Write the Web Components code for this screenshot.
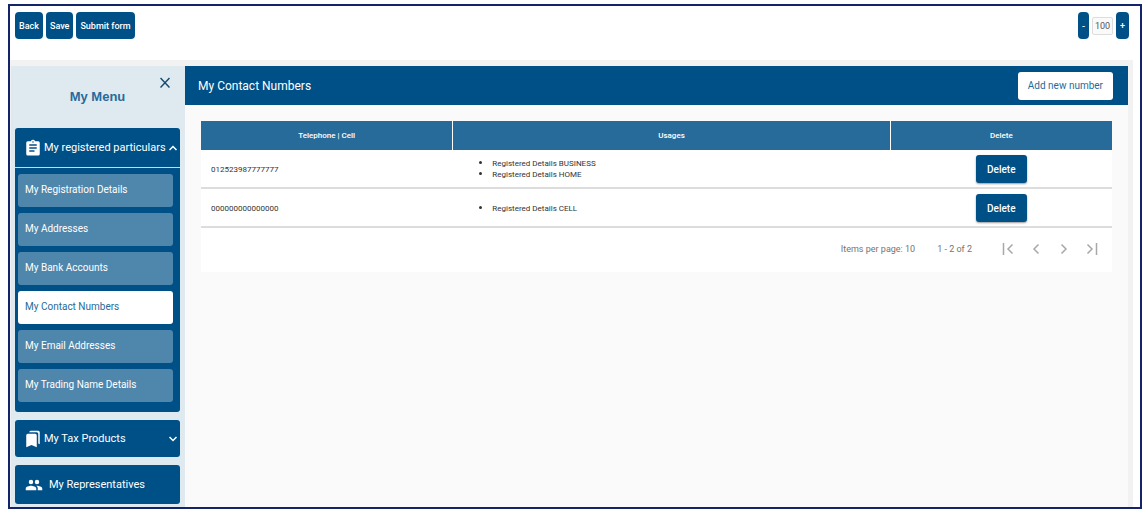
<!DOCTYPE html>
<html lang="en">
<head>
<meta charset="utf-8">
<meta name="viewport" content="width=device-width, initial-scale=1">
<title>My Contact Numbers</title>
<style>
    html, body {
        height: 100%;
        margin: 0;
    }

    body {
        box-sizing: border-box;
        padding: 4px 5px 3px 8px;
        background-color: #ffffff;
        font-family: Roboto, "Liberation Sans", sans-serif;
        font-size: 11px;
        --navy: #005088;
        --steel: #276b9a;
    }
</style>
</head>
<body>
<app-shell>
    <tool-bar slot="toolbar"></tool-bar>
    <side-menu slot="menu">
        <menu-group icon="clipboard" label="My registered particulars" open>
            <menu-item>My Registration Details</menu-item>
            <menu-item>My Addresses</menu-item>
            <menu-item>My Bank Accounts</menu-item>
            <menu-item active>My Contact Numbers</menu-item>
            <menu-item>My Email Addresses</menu-item>
            <menu-item>My Trading Name Details</menu-item>
        </menu-group>
        <menu-group icon="bookmarks" label="My Tax Products"></menu-group>
        <menu-group icon="people" label="My Representatives" plain></menu-group>
    </side-menu>
    <content-panel heading="My Contact Numbers">
        <action-button slot="action" kind="light">Add new number</action-button>
        <contact-table></contact-table>
        <page-navigator></page-navigator>
    </content-panel>
</app-shell>

<script>
    function attach(element, html) {
        const $template = document.createElement('template');
        $template.innerHTML = html;
        element.attachShadow({mode: 'open'});
        element.shadowRoot.appendChild($template.content.cloneNode(true));
    }

    const icons = {
        clipboard: '<path fill-rule="evenodd" d="M19 3h-4.2a3 3 0 0 0-5.6 0H5a2 2 0 0 0-2 2v15a2 2 0 0 0 2 2h14a2 2 0 0 0 2-2V5a2 2 0 0 0-2-2zm-7 0a1 1 0 1 1 0 2 1 1 0 0 1 0-2zm2 14H7v-2h7zm3-4H7v-2h10zm0-4H7V7h10z"/>',
        bookmarks: '<path d="M19 18l2 1V3a2 2 0 0 0-2-2H9a2 2 0 0 0-2 2h10a2 2 0 0 1 2 2z"/><path d="M15 5H5a2 2 0 0 0-2 2v16l7-3 7 3V7a2 2 0 0 0-2-2z"/>',
        people: '<path d="M16 11a3 3 0 1 0 0-6 3 3 0 0 0 0 6zm-8 0a3 3 0 1 0 0-6 3 3 0 0 0 0 6zm0 2c-2.3 0-7 1.2-7 3.5V19h14v-2.5C15 14.2 10.3 13 8 13zm8 0l-1 .05c1.2.84 2 2 2 3.45V19h6v-2.5C23 14.2 18.3 13 16 13z"/>'
    };

    class AppShell extends HTMLElement {
        constructor() {
            super();
            attach(this, /*html*/ `
                <style>
                    :host {
                        box-sizing: border-box;
                        display: flex;
                        flex-direction: column;
                        min-height: 100%;
                        border: 2px solid #14246a;
                    }

                    #body {
                        flex: 1;
                        display: flex;
                        margin-right: 7px;
                        padding: 6px 5px 0 1px;
                        background-color: #f2f2f2;
                    }

                    ::slotted(content-panel) {
                        flex: 1;
                        min-width: 0;
                    }
                </style>
                <slot name="toolbar"></slot>
                <div id="body">
                    <slot name="menu"></slot>
                    <slot></slot>
                </div>
            `);
        }
    }

    class ActionButton extends HTMLElement {
        constructor() {
            super();
            attach(this, /*html*/ `
                <style>
                    :host {
                        display: inline-flex;
                    }

                    button {
                        height: 27px;
                        padding: 0 4px;
                        border: 0;
                        border-radius: 4px;
                        background-color: var(--navy);
                        color: #ffffff;
                        font: 500 9px Roboto, "Liberation Sans", sans-serif;
                        white-space: nowrap;
                    }

                    :host([kind="light"]) button {
                        height: 28px;
                        padding: 0 10px;
                        border-radius: 3px;
                        background-color: #ffffff;
                        color: var(--steel);
                        font-size: 10px;
                        font-weight: 400;
                    }

                    :host([kind="row"]) button {
                        height: 28px;
                        padding: 0 11px;
                        border-radius: 3px;
                        box-shadow: 0 1px 2px rgba(0, 0, 0, .4);
                        font-size: 10px;
                    }
                </style>
                <button type="button"><slot></slot></button>
            `);
        }
    }

    class ToolBar extends HTMLElement {
        constructor() {
            super();
            attach(this, /*html*/ `
                <style>
                    :host {
                        box-sizing: border-box;
                        display: flex;
                        justify-content: space-between;
                        height: 54px;
                        padding: 6px 11px 0 5px;
                    }

                    div {
                        display: flex;
                        align-items: flex-start;
                        gap: 3px;
                    }

                    input {
                        box-sizing: border-box;
                        width: 21px;
                        height: 18px;
                        margin-top: 5px;
                        padding: 0;
                        border: 1px solid #dddddd;
                        border-radius: 2px;
                        background-color: #fafafa;
                        color: #555555;
                        font: 9px Roboto, "Liberation Sans", sans-serif;
                        text-align: center;
                    }
                </style>
                <div>
                    <action-button>Back</action-button>
                    <action-button>Save</action-button>
                    <action-button>Submit form</action-button>
                </div>
                <div>
                    <action-button>-</action-button>
                    <input type="text" aria-label="Zoom" value="100">
                    <action-button>+</action-button>
                </div>
            `);
        }
    }

    class SideMenu extends HTMLElement {
        constructor() {
            super();
            attach(this, /*html*/ `
                <style>
                    :host {
                        box-sizing: border-box;
                        display: flex;
                        flex-direction: column;
                        gap: 8px;
                        width: 174px;
                        padding: 0 5px 3px 4px;
                        background-color: #dfe9f0;
                    }

                    header {
                        display: grid;
                        grid-template-columns: 1fr auto;
                        height: 54px;
                    }

                    h2 {
                        margin: 23px 0 0;
                        color: var(--steel);
                        font: bold 13px/16px "Liberation Sans", sans-serif;
                        text-align: center;
                    }

                    button {
                        align-self: start;
                        margin: 11px 10px 0 -20px;
                        padding: 0;
                        border: 0;
                        background: none;
                        color: #164a70;
                    }

                    svg {
                        display: block;
                        width: 10px;
                        height: 11px;
                    }
                </style>
                <header>
                    <h2>My Menu</h2>
                    <button type="button" aria-label="Close menu">
                        <svg viewBox="0 0 10 11" fill="none" stroke="currentColor" stroke-width="1.5"><path d="M.5 1l9 9.5M9.5 1l-9 9.5"/></svg>
                    </button>
                </header>
                <slot></slot>
            `);
        }
    }

    class MenuGroup extends HTMLElement {
        constructor() {
            super();
            const open = this.hasAttribute('open');
            const arrow = this.hasAttribute('plain') ? '' : /*html*/ `
                <svg id="arrow" viewBox="0 0 8 6" fill="none" stroke="currentColor" stroke-width="1.5">
                    <path d="${open ? 'M.5 5L4 1.5 7.5 5' : 'M.5 1L4 4.5 7.5 1'}"/>
                </svg>`;
            attach(this, /*html*/ `
                <style>
                    :host {
                        display: block;
                        border-radius: 3px;
                        background-color: var(--navy);
                        color: #ffffff;
                    }

                    button {
                        display: flex;
                        align-items: center;
                        gap: 2px;
                        width: 100%;
                        height: 37px;
                        padding: 0 3px 0 9px;
                        border: 0;
                        background: none;
                        color: inherit;
                        font: 11px Roboto, "Liberation Sans", sans-serif;
                        text-align: left;
                        white-space: nowrap;
                    }

                    :host([open]) button {
                        height: 40px;
                        border-bottom: 1px solid #c5dbe9;
                    }

                    :host([plain]) button {
                        height: 39px;
                        gap: 6px;
                        padding-left: 10px;
                    }

                    #icon {
                        flex: none;
                        width: 18px;
                        height: 18px;
                    }

                    #arrow {
                        flex: none;
                        width: 8px;
                        height: 6px;
                        margin-left: auto;
                    }

                    nav {
                        display: flex;
                        flex-direction: column;
                        gap: 6px;
                        padding: 6px 7px 10px 3px;
                    }
                </style>
                <button type="button" aria-expanded="${open}">
                    <svg id="icon" viewBox="0 0 24 24" fill="currentColor">${icons[this.getAttribute('icon')]}</svg>
                    <span>${this.getAttribute('label')}</span>
                    ${arrow}
                </button>
                ${open ? '<nav><slot></slot></nav>' : ''}
            `);
        }
    }

    class MenuItem extends HTMLElement {
        constructor() {
            super();
            attach(this, /*html*/ `
                <style>
                    :host {
                        display: block;
                    }

                    a {
                        display: block;
                        padding: 0 7px 1px;
                        border-radius: 3px;
                        background-color: #4f86ac;
                        color: #ffffff;
                        font-size: 10px;
                        line-height: 32px;
                        text-decoration: none;
                    }

                    :host([active]) a {
                        background-color: #ffffff;
                        color: var(--steel);
                    }
                </style>
                <a href="#"><slot></slot></a>
            `);
        }
    }

    class ContentPanel extends HTMLElement {
        constructor() {
            super();
            attach(this, /*html*/ `
                <style>
                    :host {
                        display: block;
                        background-color: #fafafa;
                    }

                    header {
                        display: flex;
                        justify-content: space-between;
                        align-items: center;
                        height: 39px;
                        padding: 0 15px 0 13px;
                        background-color: var(--navy);
                        color: #ffffff;
                    }

                    h1 {
                        margin: 0;
                        font-size: 12px;
                        font-weight: 400;
                    }

                    section {
                        margin: 16px 16px 0;
                        background-color: #ffffff;
                    }
                </style>
                <header>
                    <h1>${this.getAttribute('heading')}</h1>
                    <slot name="action"></slot>
                </header>
                <section><slot></slot></section>
            `);
        }
    }

    class ContactTable extends HTMLElement {
        constructor() {
            super();
            attach(this, /*html*/ `
                <style>
                    :host {
                        display: block;
                    }

                    table {
                        width: 100%;
                        border-collapse: separate;
                        border-spacing: 0;
                        table-layout: fixed;
                        color: #333333;
                        font-size: 8px;
                    }

                    th {
                        box-sizing: border-box;
                        height: 29px;
                        padding: 0;
                        border-right: 1px solid #ffffff;
                        background-color: var(--steel);
                        color: #ffffff;
                        font-weight: 500;
                    }

                    th:first-child {
                        width: 27.7%;
                    }

                    th:last-child {
                        width: 24.3%;
                        border-right: 0;
                    }

                    td {
                        box-sizing: border-box;
                        height: 39px;
                        padding: 1px 10px 0;
                        border-bottom: 2px solid #dcdcdc;
                    }

                    td:last-child {
                        text-align: center;
                    }

                    ul {
                        margin: 0;
                        padding-left: 29px;
                        line-height: 10px;
                    }

                    li::marker {
                        font-size: 10px;
                    }

                    action-button {
                        vertical-align: middle;
                    }
                </style>
                <table>
                    <thead>
                        <tr><th>Telephone | Cell</th><th>Usages</th><th>Delete</th></tr>
                    </thead>
                    <tbody>
                        <tr>
                            <td>012523987777777</td>
                            <td><ul><li>Registered Details BUSINESS</li><li>Registered Details HOME</li></ul></td>
                            <td><action-button kind="row">Delete</action-button></td>
                        </tr>
                        <tr>
                            <td>000000000000000</td>
                            <td><ul><li>Registered Details CELL</li></ul></td>
                            <td><action-button kind="row">Delete</action-button></td>
                        </tr>
                    </tbody>
                </table>
            `);
        }
    }

    class PageNavigator extends HTMLElement {
        constructor() {
            super();
            attach(this, /*html*/ `
                <style>
                    :host {
                        box-sizing: border-box;
                        display: flex;
                        justify-content: flex-end;
                        align-items: center;
                        height: 44px;
                        padding: 0 14px 2px 0;
                        color: #757575;
                        font-size: 9px;
                    }

                    #range {
                        margin: 0 30px 0 22px;
                    }

                    nav {
                        display: flex;
                        gap: 16px;
                    }

                    button {
                        padding: 0;
                        border: 0;
                        background: none;
                        color: #a8a8a8;
                    }

                    svg {
                        display: block;
                        width: 12px;
                        height: 12px;
                        fill: none;
                        stroke: currentColor;
                        stroke-width: 1.5;
                    }
                </style>
                <span>Items per page: 10</span>
                <span id="range">1 - 2 of 2</span>
                <nav>
                    <button type="button" aria-label="First page" disabled><svg viewBox="0 0 12 12"><path d="M1.5 0v12M10.5 1.5L6 6l4.5 4.5"/></svg></button>
                    <button type="button" aria-label="Previous page" disabled><svg viewBox="0 0 12 12"><path d="M8.5 1.5L4 6l4.5 4.5"/></svg></button>
                    <button type="button" aria-label="Next page" disabled><svg viewBox="0 0 12 12"><path d="M3.5 1.5L8 6l-4.5 4.5"/></svg></button>
                    <button type="button" aria-label="Last page" disabled><svg viewBox="0 0 12 12"><path d="M1.5 1.5L6 6l-4.5 4.5M10.5 0v12"/></svg></button>
                </nav>
            `);
        }
    }

    window.customElements.define('app-shell', AppShell);
    window.customElements.define('action-button', ActionButton);
    window.customElements.define('tool-bar', ToolBar);
    window.customElements.define('side-menu', SideMenu);
    window.customElements.define('menu-group', MenuGroup);
    window.customElements.define('menu-item', MenuItem);
    window.customElements.define('content-panel', ContentPanel);
    window.customElements.define('contact-table', ContactTable);
    window.customElements.define('page-navigator', PageNavigator);
</script>
</body>
</html>
